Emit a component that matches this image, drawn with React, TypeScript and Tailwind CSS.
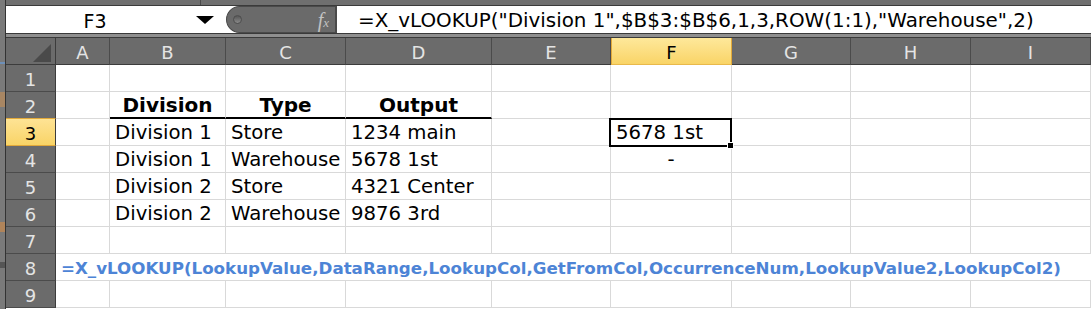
import React from 'react';

const COLS = ['A', 'B', 'C', 'D', 'E', 'F', 'G', 'H', 'I'];

type CellSpec = { text?: string; bold?: boolean; center?: boolean; thick?: boolean };

const DATA: Record<number, Record<string, CellSpec>> = {
  2: {
    B: { text: 'Division', bold: true, center: true, thick: true },
    C: { text: 'Type', bold: true, center: true, thick: true },
    D: { text: 'Output', bold: true, center: true, thick: true },
  },
  3: { B: { text: 'Division 1' }, C: { text: 'Store' }, D: { text: '1234 main' }, F: { text: '5678 1st' } },
  4: { B: { text: 'Division 1' }, C: { text: 'Warehouse' }, D: { text: '5678 1st' }, F: { text: '-', center: true } },
  5: { B: { text: 'Division 2' }, C: { text: 'Store' }, D: { text: '4321 Center' } },
  6: { B: { text: 'Division 2' }, C: { text: 'Warehouse' }, D: { text: '9876 3rd' } },
};

function ColHeader({ label }: { label: string }) {
  if (label === 'F') {
    return (
      <div className="flex h-[27px] items-end justify-center border-x border-b border-x-[#e2a93a] border-b-[#e9b94b] bg-gradient-to-b from-[#fee89a] to-[#f9d466] pb-[2px] text-[18px] leading-[18px] text-black">
        {label}
      </div>
    );
  }
  return (
    <div className="flex h-[27px] items-end justify-center border-r border-b border-r-[#4b4b4b] border-b-[#3c3c3c] bg-[#6b6b6b] pb-[2px] text-[18px] leading-[18px] text-[#e4e4e4]">
      {label}
    </div>
  );
}

function RowHeader({ n }: { n: number }) {
  if (n === 3) {
    return (
      <div className="-mt-[1px] flex h-[28px] items-end justify-center border-y border-r border-y-[#e2a93a] border-r-[#3c3c3c] bg-gradient-to-b from-[#fee394] to-[#f9d466] pb-[2px] text-[18px] leading-[18px] text-black">
        {n}
      </div>
    );
  }
  return (
    <div className="flex h-[27px] items-end justify-center border-r border-b border-r-[#3c3c3c] border-b-[#4b4b4b] bg-[#6b6b6b] pb-[2px] text-[18px] leading-[18px] text-[#e4e4e4]">
      {n}
    </div>
  );
}

function Cell({ row, col }: { row: number; col: string }) {
  const spec = DATA[row]?.[col] ?? {};
  const selected = row === 3 && col === 'F';
  return (
    <div
      className={
        'relative flex h-[27px] items-end whitespace-nowrap border-r border-[#d9d9d9] pb-[2px] text-black ' +
        (spec.thick ? 'border-b-2 border-b-black ' : 'border-b ') +
        (spec.center ? 'justify-center ' : 'pl-[5px] ') +
        (spec.bold ? 'text-[20px] font-bold leading-[20px]' : 'text-[19.7px] leading-[20px]')
      }
    >
      {spec.text}
      {selected && (
        <div className="absolute -left-[2px] -top-[1px] z-10 h-[29px] w-[123px] border-2 border-black">
          <div className="absolute -bottom-[4px] -right-[4px] h-[7px] w-[7px] border border-white bg-black" />
        </div>
      )}
    </div>
  );
}

function FormulaBar() {
  return (
    <div className="flex flex-col">
      <div className="flex h-[6px] border-b border-[#3a3a3a] bg-[#6f6f6f]">
        <div className="w-[194px]" />
        <div className="flex-1 border-l border-[#4a4a4a]" />
      </div>
      <div className="flex h-[28px] border-b border-[#3a3a3a] bg-white">
        <div className="flex w-[220px] items-center">
          <div className="w-[178px] pt-[2px] text-center text-[19px] leading-[20px] text-black">F3</div>
          <svg width="18" height="9" viewBox="0 0 18 9" className="ml-[12px] mt-[1px]">
            <polygon points="0,0 18,0 9,8" fill="#000" />
          </svg>
        </div>
        <div className="flex w-[111px] items-center justify-between rounded-l-full border border-r-2 border-[#4a4a4a] bg-[#6a6a6a]">
          <div className="ml-[6px] h-[9px] w-[9px] rounded-full border border-[#4d4d4d] bg-gradient-to-b from-[#575757] to-[#8a8a8a]" />
          <div className="mr-[6px] font-['Liberation_Serif',serif] italic leading-none text-[#c2c2c2]">
            <span className="text-[20px]">f</span>
            <span className="text-[13px]">x</span>
          </div>
        </div>
        <div className="flex flex-1 items-center pl-[21px] pt-[2px] text-[19.9px] leading-[20px] whitespace-nowrap text-black">
          =X_vLOOKUP("Division 1",$B$3:$B$6,1,3,ROW(1:1),"Warehouse",2)
        </div>
      </div>
      <div className="h-[4px] border-b border-[#3a3a3a] bg-[#8f8f8f]" />
    </div>
  );
}

function LeftStrip() {
  return (
    <div className="flex w-[6px] flex-col border-r border-[#333] bg-[#7a7a7a]">
      <div className="h-[62px]" />
      <div className="h-[2px] bg-[#6d8fb8]" />
      <div className="h-[28px]" />
      <div className="h-[15px] bg-[#a88663]" />
      <div className="h-[115px]" />
      <div className="h-[10px] bg-[#b0845a]" />
      <div className="h-[30px]" />
      <div className="h-[6px] bg-[#555]" />
      <div className="flex-1" />
    </div>
  );
}

export default function App() {
  const rows = [1, 2, 3, 4, 5, 6, 7, 8, 9];
  return (
    <div className="flex h-[309px] w-[1091px] overflow-hidden bg-white font-['DejaVu_Sans',sans-serif]">
      <LeftStrip />
      <div className="flex flex-1 flex-col">
        <FormulaBar />
        <div className="grid grid-cols-[50px_54px_116px_120px_146px_119px_121px_119px_120px_120px]">
          <div className="relative h-[27px] border-r border-b border-r-[#3c3c3c] border-b-[#3c3c3c] bg-[#6b6b6b]">
            <svg width="18" height="18" viewBox="0 0 18 18" className="absolute bottom-[2px] right-[4px]">
              <polygon points="18,0 18,18 0,18" fill="#4a4a4a" />
            </svg>
          </div>
          {COLS.map((c) => (
            <ColHeader key={c} label={c} />
          ))}
          {rows.map((r) => (
            <React.Fragment key={r}>
              <RowHeader n={r} />
              {r === 8 ? (
                <div className="col-span-9 flex h-[27px] items-end whitespace-nowrap border-b border-[#d9d9d9] pb-[2px] pl-[5px] text-[16.7px] font-bold leading-[20px] text-[#4d84d6]">
                  =X_vLOOKUP(LookupValue,DataRange,LookupCol,GetFromCol,OccurrenceNum,LookupValue2,LookupCol2)
                </div>
              ) : (
                COLS.map((c) => <Cell key={c} row={r} col={c} />)
              )}
            </React.Fragment>
          ))}
        </div>
      </div>
    </div>
  );
}
